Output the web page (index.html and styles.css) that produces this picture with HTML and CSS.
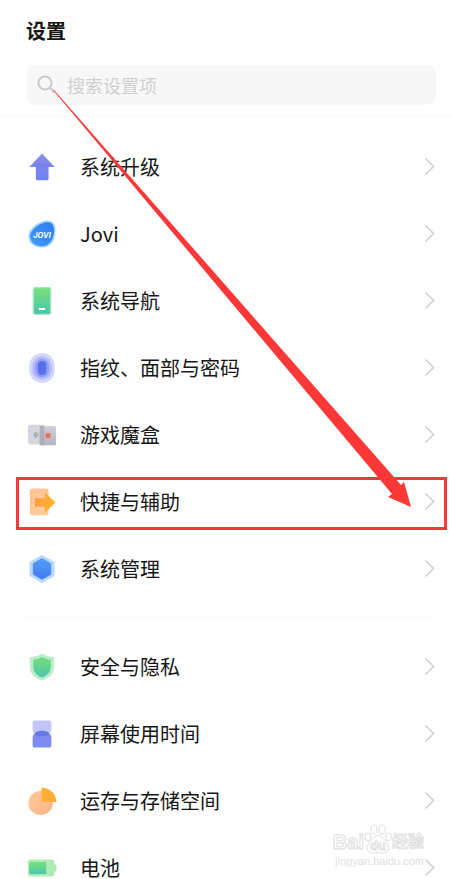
FILE: index.html
```html
<!DOCTYPE html>
<html lang="zh-CN">
<head>
<meta charset="utf-8">
<meta name="viewport" content="width=device-width, initial-scale=1">
<title>设置</title>
<link rel="stylesheet" href="styles.css">
</head>
<body>
<svg class="defs" width="0" height="0" aria-hidden="true">
  <defs>
    <linearGradient id="violet" x1="0" y1="0" x2="0" y2="1"><stop offset="0" stop-color="#898ce8"/><stop offset="1" stop-color="#7180f5"/></linearGradient>
    <linearGradient id="blue" x1="0" y1="0" x2="0" y2="1"><stop offset="0" stop-color="#55a1fa"/><stop offset="1" stop-color="#3f78f0"/></linearGradient>
    <linearGradient id="jovi" x1="1" y1="0" x2="0" y2="1"><stop offset="0" stop-color="#2f7df0"/><stop offset="1" stop-color="#3f9cf5"/></linearGradient>
    <linearGradient id="green" x1="0" y1="0" x2="0" y2="1"><stop offset="0" stop-color="#75e07a"/><stop offset="1" stop-color="#4cc5ad"/></linearGradient>
    <linearGradient id="peach" x1="0" y1="0" x2="1" y2="1"><stop offset="0" stop-color="#ffc09a"/><stop offset="1" stop-color="#ffd196"/></linearGradient>
    <linearGradient id="pie" x1="0" y1="0" x2="1" y2="1"><stop offset="0" stop-color="#ffc998"/><stop offset="1" stop-color="#ffb488"/></linearGradient>
    <linearGradient id="orange" x1="0" y1="0" x2="1" y2="0"><stop offset="0" stop-color="#ff9d45"/><stop offset="1" stop-color="#ffb62e"/></linearGradient>
    <linearGradient id="grey" x1="0" y1="0" x2="0" y2="1"><stop offset="0" stop-color="#cfcfd7"/><stop offset="1" stop-color="#b5b5c3"/></linearGradient>
    <symbol id="chevron" viewBox="0 0 12 20"><path d="M2.500 1.500l8 8-8 8" fill="none" stroke="#d2d2d2" stroke-width="1.700"/></symbol>
  </defs>
</svg>
<main class="screen">
  <header class="header">
    <h1 class="title">设置</h1>
    <label class="search">
      <svg class="search-icon" viewBox="0 0 20 20" aria-hidden="true"><circle cx="8" cy="8" r="6.600"/><path d="M13 13l4 4"/></svg>
      <input class="search-input" type="search" placeholder="搜索设置项" aria-label="搜索设置项">
    </label>
  </header>
  <nav class="group">
    <a class="row" href="#upgrade">
      <svg class="icon" viewBox="0 0 32 32" aria-hidden="true"><path d="M16 1.600L29.500 16h-6.500v12.500a1.500 1.500 0 0 1-1.500 1.500H11a1.500 1.500 0 0 1-1.500-1.500V16H2.500z" fill="url(#violet)"/><path d="M9.500 12H23v4H9.500z" fill="#6e74df" opacity=".35"/></svg>
      <span class="label">系统升级</span><svg class="chevron"><use href="#chevron"/></svg>
    </a>
    <a class="row" href="#jovi">
      <svg class="icon" viewBox="0 0 32 32" aria-hidden="true"><path d="M22 1.500c6 0 8.500 4.500 8.500 11 0 10-5.500 18-14.500 18S1.500 26 1.500 18.500C1.500 9.500 14 1.500 22 1.500z" fill="#a5d5fc"/><path d="M22 3.500c5 0 6.800 3.500 6.800 9C28.800 21.500 24 29 16 29 8.500 29 3.300 25 3.300 18.500 3.300 11 15 3.500 22 3.500z" fill="url(#jovi)"/><text class="jovi-mark" x="16" y="20" text-anchor="middle">JOVI</text></svg>
      <span class="label">Jovi</span><svg class="chevron"><use href="#chevron"/></svg>
    </a>
    <a class="row" href="#navigation">
      <svg class="icon" viewBox="0 0 32 32" aria-hidden="true"><rect x="6" y="1" width="20" height="30" rx="2.500" fill="#a9e5c8"/><rect x="7.500" y="2.500" width="17" height="27" rx="1.500" fill="url(#green)"/><rect x="12.500" y="23.500" width="7" height="2" rx="1" fill="#fff"/></svg>
      <span class="label">系统导航</span><svg class="chevron"><use href="#chevron"/></svg>
    </a>
    <a class="row" href="#security">
      <svg class="icon" viewBox="0 0 32 32" aria-hidden="true"><rect x="2.500" y="0" width="27" height="32" rx="13.500" fill="#d3d6fc"/><rect x="5.500" y="3.500" width="21" height="25" rx="10.500" fill="#b5bbfa"/><rect x="8.500" y="6" width="15" height="20" rx="7.500" fill="#929df7"/><rect x="11.500" y="8.500" width="9" height="15" rx="4.500" fill="#5870ec"/></svg>
      <span class="label">指纹、面部与密码</span><svg class="chevron"><use href="#chevron"/></svg>
    </a>
    <a class="row" href="#games">
      <svg class="icon" viewBox="0 0 32 32" aria-hidden="true"><rect x="1" y="5" width="18" height="21" rx="2.500" fill="#d5d5dc"/><rect x="13.500" y="6.500" width="17.500" height="20.500" rx="2" fill="url(#grey)"/><path d="M13.500 6.500h5V27h-5z" fill="#a7a7b5" opacity=".7"/><path d="M9.500 12l3 4-3 4-3-4z" fill="#aeb0be"/><circle cx="22.500" cy="16.500" r="3" fill="#ec7466"/></svg>
      <span class="label">游戏魔盒</span><svg class="chevron"><use href="#chevron"/></svg>
    </a>
    <a class="row row-marked" href="#shortcuts">
      <svg class="icon" viewBox="0 0 32 32" aria-hidden="true"><rect x="3" y="1.500" width="20" height="28.500" rx="2.500" fill="url(#peach)"/><path d="M8.500 12H19V5.500L30.500 16.500 19 27.500V21H8.500z" fill="url(#orange)"/></svg>
      <span class="label">快捷与辅助</span><svg class="chevron"><use href="#chevron"/></svg>
    </a>
    <a class="row" href="#system">
      <svg class="icon" viewBox="0 0 32 32" aria-hidden="true"><path d="M16 1.500l12.800 7.200v14.600L16 30.500 3.200 23.300V8.700z" fill="#b9d8fb" stroke="#b9d8fb" stroke-linejoin="round"/><path d="M16 5l9.300 5.300v11.400L16 27l-9.300-5.300V10.300z" fill="url(#blue)" stroke="#4b8df5" stroke-linejoin="round"/></svg>
      <span class="label">系统管理</span><svg class="chevron"><use href="#chevron"/></svg>
    </a>
  </nav>
  <hr class="divider">
  <nav class="group group-second">
    <a class="row" href="#privacy">
      <svg class="icon" viewBox="0 0 32 32" aria-hidden="true"><path d="M16 1.500c4 2.500 8 3.500 13 4v10.500c0 7-5 11.500-13 14.500C8 27.500 3 23 3 16V5.500c5-.5 9-1.500 13-4z" fill="#bceccb"/><path d="M16 5c3 2 6 2.800 9.300 3.300V16c0 5.500-3.500 8.800-9.300 11.300C10.200 24.800 6.700 21.500 6.700 16V8.300C10 7.800 13 7 16 5z" fill="url(#green)"/></svg>
      <span class="label">安全与隐私</span><svg class="chevron"><use href="#chevron"/></svg>
    </a>
    <a class="row" href="#screen-time">
      <svg class="icon" viewBox="0 0 32 32" aria-hidden="true"><path d="M8 1.500h16a2 2 0 0 1 2 2V12q0 3-3 4H9q-3-1-3-4V3.500a2 2 0 0 1 2-2z" fill="#c1c6f8"/><path d="M6 20q0-3.500 3-5 2-2.500 7-2.500t7 2.500q3 1.500 3 5v8.500a2 2 0 0 1-2 2H8a2 2 0 0 1-2-2z" fill="#7e8cf2"/><path d="M8.500 15.500q1.500-3 7.500-3t7.500 3q0 3-7.500 3t-7.500-3z" fill="#6678ec"/></svg>
      <span class="label">屏幕使用时间</span><svg class="chevron"><use href="#chevron"/></svg>
    </a>
    <a class="row" href="#storage">
      <svg class="icon" viewBox="0 0 32 32" aria-hidden="true"><circle cx="14.500" cy="18" r="13" fill="url(#pie)"/><path d="M15.500 1.500Q30 3 31.500 17h-16z" fill="#ffad35"/></svg>
      <span class="label">运存与存储空间</span><svg class="chevron"><use href="#chevron"/></svg>
    </a>
    <a class="row" href="#battery">
      <svg class="icon" viewBox="0 0 32 32" aria-hidden="true"><path d="M3 7h24a2 2 0 0 1 2 2v3h.5q2 0 2 2v4q0 2-2 2H29v3a2 2 0 0 1-2 2H3a2 2 0 0 1-2-2V9a2 2 0 0 1 2-2z" fill="#aeecb5"/><rect x="2.500" y="9.500" width="18" height="13" rx="1" fill="url(#green)"/></svg>
      <span class="label">电池</span><svg class="chevron"><use href="#chevron"/></svg>
    </a>
  </nav>
  <svg class="pointer" viewBox="0 0 452 520" aria-hidden="true"><path d="M53 90L54 90 401 485 404 482 411 507 388 497 392 494z"/></svg>
  <div class="watermark">
    <div class="watermark-brand">
      <span>Bai</span>
      <svg class="paw" viewBox="0 0 28 30" aria-hidden="true"><g><ellipse cx="4" cy="13" rx="3" ry="4"/><ellipse cx="10" cy="5.500" rx="3" ry="4.500"/><ellipse cx="18" cy="5.500" rx="3" ry="4.500"/><ellipse cx="24.500" cy="13" rx="3" ry="4"/><path d="M14 11.500c3 0 4.500 3 7.500 5.500 5 4.500 4 11.500-1 12-3 .3-4.500-.5-6.500-.5s-3.500.8-6.500.5c-5-.5-6-7.500-1-12 3-2.500 4.500-5.500 7.500-5.500z"/></g><text x="14" y="26" text-anchor="middle">du</text></svg>
      <span class="watermark-name">经验</span>
    </div>
    <div class="watermark-url">jingyan.baidu.com</div>
  </div>
</main>
</body>
</html>
```
FILE: styles.css
```css
* { box-sizing: border-box; }

body {
  margin: 0;
  background: #fefefe;
  color: #161616;
  font-family: "Noto Sans CJK SC", sans-serif;
}

.defs { position: absolute; }

.screen {
  position: relative;
  height: 100vh;
  overflow: hidden;
}

.header {
  padding: 16px 16px 10px 26px;
  border-bottom: 1px solid #f8f8f8;
}

.title {
  margin: 0 0 19px;
  font-size: 20px;
  font-weight: 700;
  line-height: 30px;
}

.search {
  display: flex;
  align-items: center;
  gap: 10px;
  height: 40px;
  padding: 0 11px;
  border-radius: 10px;
  background: #f7f7f7;
}

.search-icon {
  flex: none;
  width: 20px;
  height: 20px;
  fill: none;
  stroke: #c9c9cb;
  stroke-width: 2;
  stroke-linecap: round;
}

.search-input {
  flex: 1;
  min-width: 0;
  padding: 0;
  border: 0;
  outline: 0;
  background: none;
  font: inherit;
  font-size: 18px;
}

.search-input::placeholder { color: #cfcfcf; }

.group { padding: 17px 17px 15px 26px; }

.group-second { padding-top: 15px; }

.row {
  position: relative;
  display: flex;
  align-items: center;
  height: 67px;
  color: inherit;
  text-decoration: none;
}

.icon {
  flex: none;
  width: 32px;
  height: 30px;
}

.label {
  flex: 1;
  margin-left: 22px;
  font-size: 20px;
  line-height: 22px;
}

.chevron {
  flex: none;
  width: 12px;
  height: 20px;
}

.jovi-mark {
  fill: #fff;
  font-family: Inter, sans-serif;
  font-size: 8px;
  font-style: italic;
  font-weight: 700;
}

.row-marked::after {
  content: "";
  position: absolute;
  inset: 9px -12px 5px -10px;
  border: 3px solid #f93638;
}

.divider {
  height: 1px;
  margin: 0 16px 0 26px;
  border: 0;
  background: #f7f7f7;
}

.pointer {
  position: absolute;
  top: 0;
  left: 0;
  width: 452px;
  height: 520px;
  fill: #fb3737;
  pointer-events: none;
}

.watermark {
  position: absolute;
  right: 28px;
  bottom: 11px;
  color: #fff;
  font-family: "Liberation Sans", "Noto Sans CJK SC", sans-serif;
  pointer-events: none;
}

.watermark-brand {
  display: flex;
  align-items: flex-end;
  height: 30px;
  font-size: 20px;
  font-weight: 700;
  line-height: 24px;
  -webkit-text-stroke: 1px #dedede;
}

.watermark-name { font-size: 16px; }

.paw {
  width: 28px;
  height: 30px;
}

.paw g {
  fill: #fff;
  stroke: #dedede;
}

.paw text {
  fill: #fff;
  stroke: #dedede;
  font-size: 13px;
}

.watermark-url {
  color: #e0e0e0;
  font-size: 11px;
  line-height: 14px;
  text-align: right;
}
```
